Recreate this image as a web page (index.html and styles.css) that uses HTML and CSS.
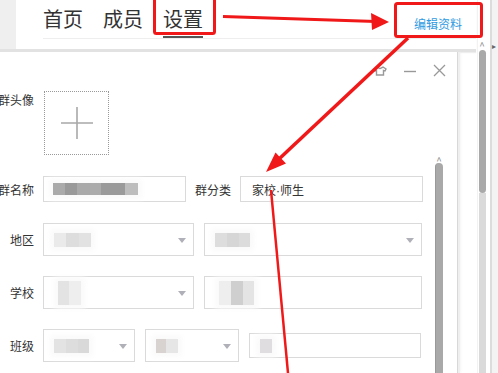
FILE: index.html
```html
<!DOCTYPE html>
<html>
<head>
	<meta charset="utf-8">
	<title>设置</title>
	<link rel="stylesheet" href="styles.css">
</head>
<body>
	<div class="app">
		<div class="topbar">
			<div class="side"></div>
			<div class="nav">
				<div class="tab">首页</div>
				<div class="tab">成员</div>
				<div class="tab active">设置</div>
				<a class="edit-link">编辑资料</a>
			</div>
		</div>

		<div class="stage">
			<div class="dialog">
				<div class="dialog-head">
					<svg class="icon" width="14" height="10" viewBox="0 0 14 10">
						<path d="M1 3 L4 1 L6 2 Q7 3 8 2 L10 1 L13 3 L12 5 L10.5 4.5 L10.5 9 L3.5 9 L3.5 4.5 L2 5 Z" fill="none" stroke="#999" stroke-width="1.4"/>
					</svg>
					<svg class="icon" width="12" height="12" viewBox="0 0 12 12">
						<line x1="0" y1="6.5" x2="12" y2="6.5" stroke="#999" stroke-width="1.4"/>
					</svg>
					<svg class="icon" width="13" height="13" viewBox="0 0 13 13">
						<path d="M1 1 L12 12 M12 1 L1 12" stroke="#999" stroke-width="1.3"/>
					</svg>
				</div>

				<div class="dialog-body">
					<div class="form">
						<div class="row avatar-row">
							<label class="label">群头像</label>
							<div class="avatar-box">
								<svg width="32" height="32" viewBox="0 0 32 32">
									<path d="M0 16 H32 M16 0 V32" stroke="#a8a8a8" stroke-width="1.6"/>
								</svg>
							</div>
						</div>

						<div class="row">
							<label class="label">群名称</label>
							<div class="field w-name">
								<span class="blur">
									<i style="width:12px;background:#aaa"></i><i style="width:12px;background:#999"></i><i style="width:13px;background:#a9a9a9"></i><i style="width:11px;background:#ababab"></i><i style="width:24px;background:#9a9a9a"></i><i style="width:13px;background:#bdbdbd"></i>
								</span>
							</div>
							<label class="label label-inline">群分类</label>
							<div class="field w-cat"><span class="value">家校·师生</span></div>
						</div>

						<div class="row tall">
							<label class="label">地区</label>
							<div class="field select w-151">
								<span class="blur light">
									<i style="width:12px;background:#eaeaea"></i><i style="width:13px;background:#ddd"></i><i style="width:12px;background:#e2e2e2"></i>
								</span>
								<span class="caret"></span>
							</div>
							<div class="field select w-218">
								<span class="blur light">
									<i style="width:12px;background:#ddd"></i><i style="width:12px;background:#d6d6d6"></i><i style="width:11px;background:#dcdcdc"></i>
								</span>
								<span class="caret"></span>
							</div>
						</div>

						<div class="row tall">
							<label class="label">学校</label>
							<div class="field select w-151">
								<span class="blur light block">
									<i style="width:11px;background:#e3e3e3"></i><i style="width:12px;background:#eee"></i>
								</span>
								<span class="caret"></span>
							</div>
							<div class="field w-218">
								<span class="blur light block">
									<i style="width:12px;background:#eee"></i><i style="width:12px;background:#cfcfcf"></i><i style="width:11px;background:#e4e4e4"></i>
								</span>
							</div>
						</div>

						<div class="row tall">
							<label class="label">班级</label>
							<div class="field select w-92">
								<span class="blur light">
									<i style="width:12px;background:#e3e3e3"></i><i style="width:12px;background:#ddd"></i><i style="width:11px;background:#d9d9d9"></i>
								</span>
								<span class="caret"></span>
							</div>
							<div class="field select w-94">
								<span class="blur light">
									<i style="width:10px;background:#d8d2d0"></i><i style="width:12px;background:#e6e6e6"></i>
								</span>
								<span class="caret"></span>
							</div>
							<div class="field short w-172">
								<span class="blur light">
									<i style="width:12px;background:#e0dde0"></i>
								</span>
							</div>
						</div>
					</div>

					<div class="scroll">
						<span class="scroll-up">^</span>
						<div class="scroll-thumb"></div>
					</div>
				</div>
			</div>
			<div class="stage-rest"></div>
		</div>
	</div>

	<div class="rail">
		<div class="rail-track">
			<span class="scroll-up">^</span>
			<div class="rail-thumb"></div>
			<div class="rail-rest"></div>
		</div>
		<div class="rail-edge"><span class="rail-arrow">▸</span></div>
	</div>

	<!-- annotations drawn over the screenshot -->
	<svg class="marks" width="498" height="373" viewBox="0 0 498 373">
		<rect x="154.5" y="-6" width="60" height="39.5" rx="2" fill="none" stroke="#f01818" stroke-width="3"/>
		<rect x="395.5" y="3.5" width="86" height="33" rx="2" fill="none" stroke="#f01818" stroke-width="3"/>
		<line x1="223" y1="16.5" x2="376" y2="21.5" stroke="#f01818" stroke-width="3"/>
		<polygon points="389,22 371,13 372,30" fill="#f01818"/>
		<line x1="408" y1="38" x2="279" y2="159" stroke="#f01818" stroke-width="3.5"/>
		<polygon points="266,172 275.5,152.5 286,163.5" fill="#f01818"/>
		<line x1="271" y1="190" x2="288" y2="373" stroke="#f01818" stroke-width="2.5"/>
	</svg>
</body>
</html>
```

FILE: styles.css
```css
body {
	display: flex;
	width: 498px;
	height: 373px;
	margin: 0;
	overflow: hidden;
	position: relative;
	background-color: #fff;
	font-family: "Noto Sans CJK SC", "Noto Sans", sans-serif;
	color: #333;
}
.app {
	display: flex;
	flex-direction: column;
	width: 476px;
	height: 373px;
}
.topbar {
	display: flex;
	flex-shrink: 0;
	height: 49px;
	border-bottom: 3px solid #e2e2e2;
	box-shadow: 0 1px 1px #eee;
}
.side {
	width: 16px;
	background-color: #efefef;
}
.nav {
	flex: 1;
	display: flex;
	align-items: flex-start;
	height: 38px;
	margin-left: 27px;
	border-bottom: 1px solid #eeeeee;
}
.tab {
	height: 36px;
	margin-right: 20px;
	font-size: 20px;
	line-height: 38px;
	color: #333;
	border-bottom: 2px solid transparent;
}
.tab.active {
	border-bottom-color: #555;
}
.edit-link {
	margin-left: auto;
	margin-right: 14px;
	padding-top: 15px;
	font-size: 12px;
	color: #2f9be2;
}
.stage {
	flex: 1;
	min-height: 0;
	display: flex;
	overflow: hidden;
}
.dialog {
	width: 457px;
	border-right: 1px solid #d8d8d8;
	box-shadow: 2px 0 3px #ececec;
	background-color: #fff;
}
.dialog-head {
	display: flex;
	justify-content: flex-end;
	align-items: center;
	gap: 17px;
	height: 37px;
	padding-right: 11px;
}
.icon {
	display: block;
}
.dialog-body {
	display: flex;
}
.form {
	width: 435px;
	padding-top: 2px;
}
.row {
	display: flex;
	align-items: center;
	margin-bottom: 21px;
}
.row.tall {
	margin-bottom: 20px;
}
.label {
	width: 34px;
	margin-right: 9px;
	font-size: 12px;
	text-align: right;
	white-space: nowrap;
	direction: rtl;
}
.label-inline {
	width: 36px;
	margin-left: 9px;
	text-align: left;
	direction: ltr;
}
.avatar-row {
	align-items: flex-start;
}
.avatar-row .label {
	line-height: 14px;
	margin-top: 2px;
}
.avatar-box {
	display: flex;
	align-items: center;
	justify-content: center;
	width: 63px;
	height: 62px;
	margin-left: 1px;
	border: 1px dotted #999;
}
.field {
	position: relative;
	display: flex;
	align-items: center;
	box-sizing: border-box;
	height: 26px;
	border: 1px solid #dadada;
	background-color: #fff;
}
.tall .field {
	height: 33px;
}
.tall .field.short {
	height: 25px;
	margin-left: 11px;
}
.tall .field + .field {
	margin-left: 10px;
}
.w-name { width: 143px; }
.w-cat { width: 183px; }
.w-151 { width: 151px; }
.w-218 { width: 218px; }
.w-92 { width: 92px; }
.w-94 { width: 94px; }
.tall .w-172 { width: 172px; margin-left: 11px; }
.value {
	padding-left: 11px;
	font-family: "Liberation Sans", "Noto Sans CJK SC", sans-serif;
	font-size: 12px;
	color: #333;
}
.blur {
	display: flex;
	height: 12px;
	margin-left: 9px;
	filter: blur(0.6px);
	box-shadow: 0 0 6px 4px #fafafa;
}
.blur i {
	display: block;
}
.blur.light {
	margin-left: 10px;
	height: 14px;
}
.blur.block {
	height: 24px;
	margin-left: 14px;
}
.caret {
	position: absolute;
	right: 7px;
	top: 50%;
	margin-top: -2px;
	border-left: 4px solid transparent;
	border-right: 4px solid transparent;
	border-top: 5px solid #b0b0b8;
}
.scroll {
	display: flex;
	flex-direction: column;
	align-items: center;
	width: 8px;
	padding-top: 66px;
}
.scroll-up {
	height: 8px;
	font-size: 10px;
	line-height: 12px;
	color: #888;
}
.scroll-thumb {
	width: 8px;
	height: 300px;
	border-radius: 4px 4px 0 0;
	background-color: #a9a9a9;
	border-left: 1px solid #999;
	box-sizing: border-box;
}
.stage-rest {
	flex: 1;
	border-left: 2px solid #efefef;
}
.rail {
	display: flex;
	width: 22px;
}
.rail-track {
	display: flex;
	flex-direction: column;
	align-items: center;
	width: 8px;
	margin-left: 1px;
	padding-top: 40px;
	border-left: 1px solid #f2f2f2;
}
.rail-thumb {
	width: 7px;
	height: 143px;
	margin-top: 2px;
	border-radius: 4px;
	background-color: #a9a9a9;
}
.rail-rest {
	flex: 1;
	width: 7px;
	background-color: #dadada;
}
.rail-edge {
	flex: 1;
	margin-left: 4px;
	border-left: 2px solid #dcdcdc;
	background-color: #f3f3f3;
	font-size: 8px;
	color: #666;
	padding-top: 42px;
}
.rail-arrow {
	display: block;
	line-height: 8px;
}
.marks {
	position: absolute;
	left: 0;
	top: 0;
	pointer-events: none;
}
```
